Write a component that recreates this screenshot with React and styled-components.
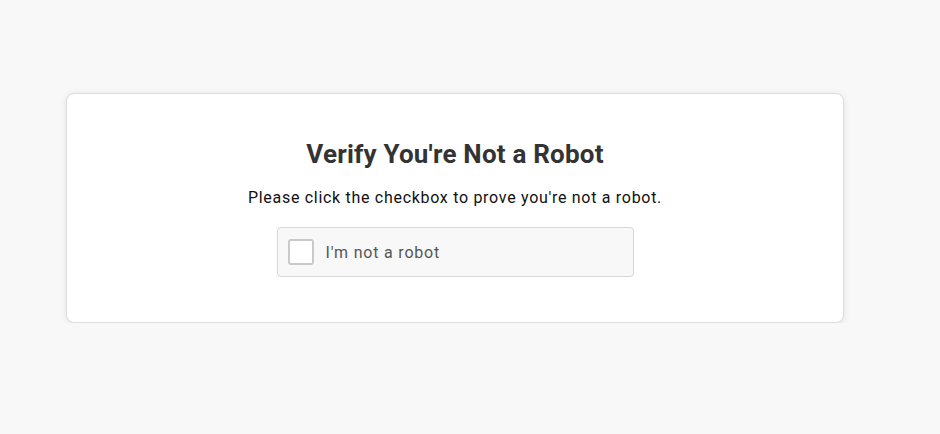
import React, { useState } from "react";
import styled, { createGlobalStyle } from "styled-components";

const GlobalStyle = createGlobalStyle`
    body {
        margin: 0;
        background: #f8f8f8;
        font-family: Roboto, "Liberation Sans", sans-serif;
    }
`;

const Page = styled.div`
    padding: 93px 96px 0 66px;
`;

const Card = styled.div`
    width: 778px;
    box-sizing: border-box;
    background: #fff;
    border: 1px solid #dedede;
    border-radius: 8px;
    box-shadow: 0 1px 6px rgba(0, 0, 0, 0.1);
    padding: 44px 20px 45px;
    display: flex;
    flex-direction: column;
    align-items: center;
`;

const Title = styled.h2`
    margin: 0 0 17px;
    font-size: 26px;
    line-height: 32px;
    font-weight: 700;
    letter-spacing: 0.2px;
    color: #333;
`;

const Subtitle = styled.p`
    margin: 0 0 18px;
    font-size: 16px;
    line-height: 22px;
    letter-spacing: 0.7px;
    color: #111;
`;

const CheckRow = styled.label`
    width: 357px;
    height: 50px;
    box-sizing: border-box;
    display: flex;
    align-items: center;
    gap: 12px;
    padding: 0 10px;
    background: #f8f8f8;
    border: 1px solid #d6d6d6;
    border-radius: 4px;
    cursor: pointer;
`;

const Box = styled.span`
    width: 26px;
    height: 26px;
    box-sizing: border-box;
    border: 2px solid ${p => (p.$checked ? "#4a90e2" : "#c9c9c9")};
    border-radius: 3px;
    background: #fff;
`;

const Label = styled.span`
    font-size: 16px;
    letter-spacing: 0.8px;
    color: #555;
`;

export default function App() {
    const [checked, setChecked] = useState(false);

    return (
        <>
            <GlobalStyle />
            <Page>
                <Card>
                    <Title>Verify You're Not a Robot</Title>
                    <Subtitle>Please click the checkbox to prove you're not a robot.</Subtitle>
                    <CheckRow onClick={() => setChecked(!checked)}>
                        <Box $checked={checked} />
                        <Label>I'm not a robot</Label>
                    </CheckRow>
                </Card>
            </Page>
        </>
    );
}
